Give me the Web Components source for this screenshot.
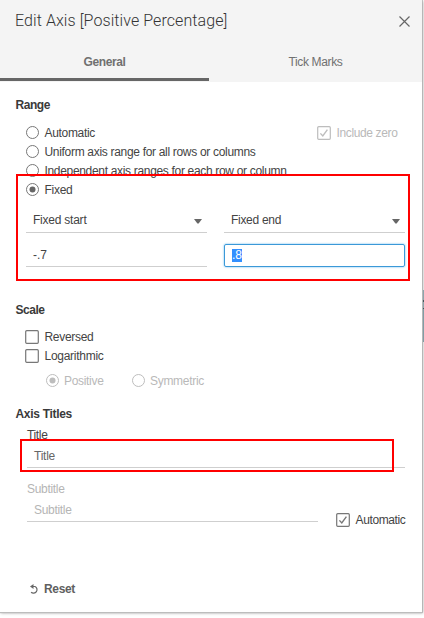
<!DOCTYPE html>
<html lang="en">
<head>
<meta charset="utf-8">
<title>Edit Axis</title>
<style>
html,body{margin:0;width:424px;height:618px;overflow:hidden;background:#fff}
body{font:12px/16px "Liberation Sans",Arial,sans-serif;color:#444}
</style>
</head>
<body>
<axis-dialog></axis-dialog>
<script>
const define = (name, markup, setup) => {
  const tpl = document.createElement('template');
  tpl.innerHTML = markup;
  customElements.define(name, class extends HTMLElement {
    constructor() {
      super();
      this.attachShadow({ mode: 'open' }).append(tpl.content.cloneNode(true));
    }
    connectedCallback() { if (setup) setup(this, this.shadowRoot); }
  });
};

/* Text label whose tracking is adjusted so the run takes up the given width. */
define('ui-text', `<style>
  :host{display:inline-block;white-space:nowrap}
  span{display:inline-block}
</style><span><slot></slot></span>`, (host, root) => {
  const want = parseFloat(host.getAttribute('w'));
  const n = host.textContent.length;
  const span = root.querySelector('span');
  span.style.letterSpacing = '0px';
  const have = span.getBoundingClientRect().width;
  if (want && have) span.style.letterSpacing = ((want - have) / n).toFixed(3) + 'px';
});

define('ui-radio', `<style>
  :host{display:flex;align-items:center;gap:5.5px;height:19px;color:#444;--ring:#777}
  :host([disabled]){color:#b9b9b9;--ring:#bdbdbd}
  svg{display:block;flex:none}
  .dot{display:none;fill:#666}
  :host([checked]) .dot{display:block}
  :host([disabled]) .dot{fill:#bdbdbd}
</style><svg width="13" height="13"><circle cx="6.5" cy="6.5" r="6" fill="#fff" stroke="var(--ring)"/><circle class="dot" cx="6.5" cy="6.5" r="3"/></svg><slot></slot>`);

define('ui-checkbox', `<style>
  :host{display:flex;align-items:center;gap:5.5px;height:19px;color:#444;--ring:#777}
  :host([disabled]){color:#b9b9b9;--ring:#bdbdbd}
  svg{display:block;flex:none}
  path{display:none}
  :host([checked]) path{display:block}
</style><svg width="14" height="14"><rect x=".7" y=".7" width="12.6" height="12.6" rx="1" fill="#fff" stroke="var(--ring)" stroke-width="1.2"/><path d="M3.4 7.4 5.8 10 10.4 3.6" fill="none" stroke="var(--ring)" stroke-width="1.4"/></svg><slot></slot>`);

define('ui-select', `<style>
  :host{display:flex;align-items:center;justify-content:space-between;box-sizing:border-box;height:24px;padding:0 5px 0 7px;border-bottom:1px solid #cfcfcf}
  svg{display:block;margin-top:2px}
  ::slotted(*){margin-top:-1px}
</style><slot></slot><svg width="8" height="5"><path d="M0 0H8L4.6 4.6H3.4Z" fill="#666"/></svg>`);

define('ui-field', `<style>
  :host{display:flex;align-items:center;box-sizing:border-box;height:23px;padding:0 7px;border-bottom:1px solid #cfcfcf}
  :host([focused]){padding:0 7px;border:1px solid #3b99d8;border-radius:2px;box-shadow:0 0 2px #55b0ea}
  :host([focused]) ::slotted(*){background:#3390ff;color:#fff;height:13px;line-height:13px}
</style><slot></slot>`);

define('ui-section', `<style>
  :host{display:block}
  header{font-weight:bold;color:#3a3a3a;height:16px;padding-left:15.5px}
</style><header><slot name="heading"></slot></header><slot></slot>`);

define('ui-tab', `<style>
  :host{display:flex;box-sizing:border-box;justify-content:center;align-items:center;height:39px;padding-top:3px;color:#707070;border-bottom:3px solid transparent}
  :host([active]){font-weight:bold;border-color:#666}
</style><slot></slot>`);

define('ui-callout', `<style>
  :host{position:absolute;box-sizing:border-box;border:2px solid #f00}
</style>`);

define('axis-dialog', `<style>
  :host{display:block;position:relative;width:424px;height:618px;background:#fff}
  .panel{box-sizing:border-box;width:422px;height:612px;background:#fff;box-shadow:0 1px 1px #bdbdbd,1px 1px 3px #aaa,0 0 0 1px #c8c8c8}
  .head{background:#f4f4f4;height:82px}
  .bar{display:flex;align-items:center;justify-content:space-between;height:42px;padding:0 11px 0 15px}
  .bar ui-text{font:300 16px/20px Roboto,"Open Sans",sans-serif;color:#333}
  .tabs{display:grid;grid-template-columns:209px 213px}
  .range{margin-top:15px}
  .radios{display:grid;grid-template-columns:291px 1fr;padding:10px 0 0 26px}
  .wide{grid-column:1/3}
  .pair{display:grid;grid-template-columns:181px 181px;gap:11px 17px;padding:10px 0 0 26px}
  .scale{margin-top:35px}
  .checks{padding:9px 0 0 25px}
  .modes{display:flex;gap:28px;padding:6px 0 0 45.5px}
  .titles{margin-top:16px}
  .form{padding:4px 17px 0 27px}
  .label{height:17px;display:flex;align-items:center}
  .label.sub{margin-top:12px}
  .form ui-field{height:25px;padding-top:1px}
  .muted{color:#b5b5b5}
  .subrow{display:grid;grid-template-columns:291px 1fr;gap:18px}
  .subrow ui-checkbox{margin-top:13px}
  .reset{display:flex;align-items:center;gap:5px;padding:52px 0 0 30px;font-weight:bold;color:#606060}
  .sliver{position:absolute;left:423px;top:290px;width:1px;height:52px;background:linear-gradient(#8ca5ac 0 10px,#45565b 10px 12px,#8ca5ac 12px 18px,#45565b 18px 19px,#809da5 19px)}
</style>
<div class="panel">
  <div class="head">
    <div class="bar"><ui-text w="212.5">Edit Axis [Positive Percentage]</ui-text>
      <svg width="13" height="13"><path d="M1.5 1.5 11.5 11.5M11.5 1.5 1.5 11.5" stroke="#666" stroke-width="1.2"/></svg></div>
    <div class="tabs"><ui-tab active><ui-text w="42">General</ui-text></ui-tab><ui-tab><ui-text w="54">Tick Marks</ui-text></ui-tab></div>
  </div>
  <ui-section class="range"><ui-text slot="heading" w="34.5">Range</ui-text>
    <div class="radios">
      <ui-radio><ui-text w="50.5">Automatic</ui-text></ui-radio>
      <ui-checkbox disabled checked><ui-text w="61">Include zero</ui-text></ui-checkbox>
      <ui-radio class="wide"><ui-text w="211">Uniform axis range for all rows or columns</ui-text></ui-radio>
      <ui-radio class="wide"><ui-text w="242">Independent axis ranges for each row or column</ui-text></ui-radio>
      <ui-radio class="wide" checked><ui-text w="28">Fixed</ui-text></ui-radio>
    </div>
    <div class="pair">
      <ui-select><ui-text w="53.5">Fixed start</ui-text></ui-select>
      <ui-select><ui-text w="50">Fixed end</ui-text></ui-select>
      <ui-field><ui-text w="14">-.7</ui-text></ui-field>
      <ui-field focused><ui-text w="10">.8</ui-text></ui-field>
    </div>
  </ui-section>
  <ui-section class="scale"><ui-text slot="heading" w="29">Scale</ui-text>
    <div class="checks">
      <ui-checkbox><ui-text w="49">Reversed</ui-text></ui-checkbox>
      <ui-checkbox><ui-text w="59">Logarithmic</ui-text></ui-checkbox>
    </div>
    <div class="modes">
      <ui-radio disabled checked><ui-text w="39.5">Positive</ui-text></ui-radio>
      <ui-radio disabled><ui-text w="54">Symmetric</ui-text></ui-radio>
    </div>
  </ui-section>
  <ui-section class="titles"><ui-text slot="heading" w="56.5">Axis Titles</ui-text>
    <div class="form">
      <div class="label"><ui-text w="20.5">Title</ui-text></div>
      <ui-field><ui-text w="21" style="color:#666">Title</ui-text></ui-field>
      <div class="label sub muted"><ui-text w="37.5">Subtitle</ui-text></div>
      <div class="subrow">
        <ui-field><ui-text class="muted" w="37.5">Subtitle</ui-text></ui-field>
        <ui-checkbox checked><ui-text w="50">Automatic</ui-text></ui-checkbox>
      </div>
    </div>
  </ui-section>
  <div class="reset"><svg width="9" height="11"><path d="M1 2.5H5A3.5 3.5 0 1 1 1.1 8.2" fill="none" stroke="#666" stroke-width="1.2"/><path d="M0 2.5 3.5 0V5Z" fill="#666"/></svg><ui-text w="31">Reset</ui-text></div>
</div>
<div class="sliver"></div>
<ui-callout style="left:16px;top:174px;width:394px;height:107px"></ui-callout>
<ui-callout style="left:20px;top:439px;width:374px;height:33px"></ui-callout>`);
</script>
</body>
</html>
